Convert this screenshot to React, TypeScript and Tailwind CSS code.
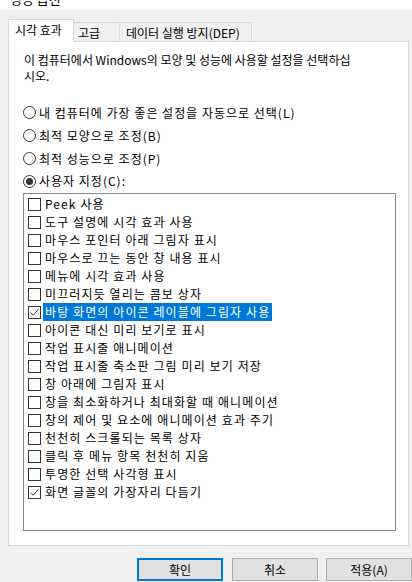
import React from 'react';

const items: { label: string; checked: boolean; selected?: boolean }[] = [
  { label: 'Peek 사용', checked: false },
  { label: '도구 설명에 시각 효과 사용', checked: false },
  { label: '마우스 포인터 아래 그림자 표시', checked: false },
  { label: '마우스로 끄는 동안 창 내용 표시', checked: false },
  { label: '메뉴에 시각 효과 사용', checked: false },
  { label: '미끄러지듯 열리는 콤보 상자', checked: false },
  { label: '바탕 화면의 아이콘 레이블에 그림자 사용', checked: true, selected: true },
  { label: '아이콘 대신 미리 보기로 표시', checked: false },
  { label: '작업 표시줄 애니메이션', checked: false },
  { label: '작업 표시줄 축소판 그림 미리 보기 저장', checked: false },
  { label: '창 아래에 그림자 표시', checked: false },
  { label: '창을 최소화하거나 최대화할 때 애니메이션', checked: false },
  { label: '창의 제어 및 요소에 애니메이션 효과 주기', checked: false },
  { label: '천천히 스크롤되는 목록 상자', checked: false },
  { label: '클릭 후 메뉴 항목 천천히 지움', checked: false },
  { label: '투명한 선택 사각형 표시', checked: false },
  { label: '화면 글꼴의 가장자리 다듬기', checked: true },
];

const radios = [
  { label: '내 컴퓨터에 가장 좋은 설정을 자동으로 선택(L)', on: false },
  { label: '최적 모양으로 조정(B)', on: false },
  { label: '최적 성능으로 조정(P)', on: false },
  { label: '사용자 지정(C):', on: true },
];

function Radio({ on }: { on: boolean }) {
  return (
    <span className="w-[13px] h-[13px] rounded-full border border-[#333333] bg-white flex items-center justify-center shrink-0">
      {on && <span className="w-[7px] h-[7px] rounded-full bg-[#333333]" />}
    </span>
  );
}

function Check({ checked }: { checked: boolean }) {
  return (
    <span className="w-[13px] h-[13px] border border-[#333333] bg-white flex items-center justify-center shrink-0">
      {checked && (
        <svg width="11" height="11" viewBox="0 0 11 11">
          <path d="M1.5 5.5 L4.2 8.2 L9.5 2.2" fill="none" stroke="#444" strokeWidth="1" />
        </svg>
      )}
    </span>
  );
}

export default function App() {
  return (
    <div
      className="w-[412px] h-[582px] bg-[#f0f0f0] overflow-hidden text-[12px] text-black"
      style={{ fontFamily: '"Noto Sans CJK KR", "Noto Sans", sans-serif' }}
    >
      {/* Title bar remnant */}
      <div className="h-[10px] bg-white overflow-hidden">
        <div className="mt-[-10px] ml-[10px] text-[13px] leading-[18px]">성능 옵션</div>
      </div>

      {/* Tabs */}
      <div className="flex items-end h-[23px] mt-[9px] ml-[8px] mb-[-1px] relative z-10">
        <div className="w-[66px] h-[23px] bg-white border border-b-0 border-[#d9d9d9] pl-[6px] leading-[20px]">
          시각 효과
        </div>
        <div className="w-[46px] h-[19px] mb-[1px] border-t border-r border-[#d9d9d9] pl-[4px] leading-[19px]">
          고급
        </div>
        <div className="w-[132px] h-[19px] mb-[1px] border-t border-r border-[#d9d9d9] pl-[6px] leading-[19px]">
          데이터 실행 방지(DEP)
        </div>
      </div>

      {/* Panel */}
      <div className="ml-[8px] w-[401px] h-[505px] bg-white border border-[#d9d9d9] pt-[10px] pl-[15px] pr-[13px] flex flex-col">
        <p className="leading-[16px]">
          이 컴퓨터에서 Windows의 모양 및 성능에 사용할 설정을 선택하십
          <br />
          시오.
        </p>

        <div className="mt-[17px] flex flex-col">
          {radios.map((r, i) => (
            <div key={i} className={`flex items-center gap-[3px] -ml-px ${i === 3 ? 'h-[22px]' : 'h-[23px]'}`}>
              <Radio on={r.on} />
              <span className="leading-[16px] tracking-[1px]">{r.label}</span>
            </div>
          ))}
        </div>

        <div className="mt-[1px] ml-[-1px] w-[373px] h-[338px] border border-[#828790] pt-[1px] flex flex-col">
          {items.map((it, i) => (
            <div key={i} className="h-[18px] flex items-center pl-[4px] gap-[2px]">
              <Check checked={it.checked} />
              <span
                className={`leading-[18px] px-[2px] tracking-[1.1px] ${it.selected ? 'bg-[#0078d7] text-white' : ''}`}
              >
                {it.label}
              </span>
            </div>
          ))}
        </div>
      </div>

      {/* Buttons */}
      <div className="flex mt-[12px] pl-[137px] gap-[9px]">
        <button className="w-[86px] h-[23px] bg-[#e1e1e1] border-2 border-[#0078d7] leading-[19px] shrink-0">
          확인
        </button>
        <button className="w-[86px] h-[23px] bg-[#e1e1e1] border border-[#adadad] leading-[21px] shrink-0">
          취소
        </button>
        <button className="w-[86px] h-[23px] bg-[#e1e1e1] border border-[#adadad] leading-[21px] shrink-0 -ml-px">
          적용(A)
        </button>
      </div>
    </div>
  );
}
